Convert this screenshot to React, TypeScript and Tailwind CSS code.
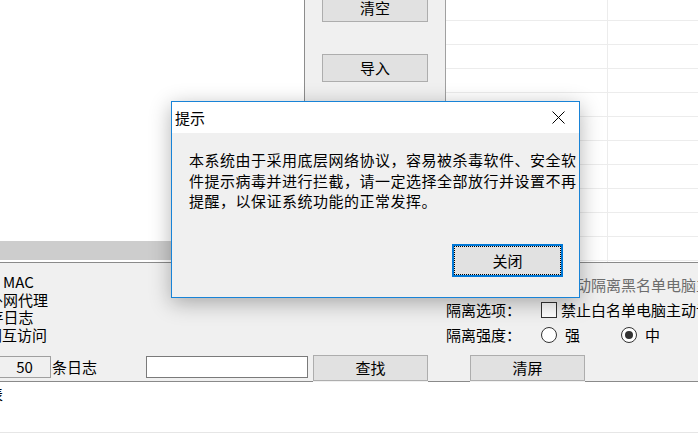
export default function App() {
  const rows = Array.from({ length: 12 });
  const btn =
    "flex items-center justify-center border border-[#adadad] bg-[#e1e1e1] text-black leading-[20px] shrink-0";
  return (
    <div className="relative w-[698px] h-[434px] overflow-hidden bg-white text-black text-[15px] leading-[20px] font-['Noto_Sans_CJK_SC',sans-serif]">
      {/* top area */}
      <div className="flex h-[262px]">
        <div className="w-[304px] flex flex-col shrink-0">
          <div className="h-[241px] bg-white" />
          <div className="h-[19px] bg-[#cdcdcd]" />
        </div>
        <div className="w-[142px] h-[262px] shrink-0 border-l border-r border-l-[#8c8c8c] border-r-[#a0a0a0] bg-[#f0f0f0] flex flex-col items-start">
          <div className={`${btn} -mt-[6px] ml-[17px] w-[106px] h-[28px]`}>清空</div>
          <div className={`${btn} mt-[32px] ml-[17px] w-[106px] h-[28px]`}>导入</div>
        </div>
        <div className="flex-1 overflow-hidden">
          <div className="-mt-[3px]">
            {rows.map((_, i) => (
              <div key={i} className="flex h-[24px] border-b border-[#ececec]">
                <div className="w-[162px] border-r border-[#ececec]" />
                <div className="flex-1" />
              </div>
            ))}
          </div>
        </div>
      </div>

      {/* bottom panel */}
      <div className="h-[120px] border-y border-[#8a8a8a] bg-[#f0f0f0] flex flex-col whitespace-nowrap">
        <div className="h-[92px] flex">
          <div className="w-[446px] shrink-0 pt-[10px] leading-[17.6px]">
            <div className="pl-[3px]">MAC</div>
            <div className="-ml-[12px]">外网代理</div>
            <div className="-ml-[11.5px]">存日志</div>
            <div className="-ml-[13px]">网互访问</div>
          </div>
          <div className="flex-1 pt-[9px]">
            <div className="h-[25px] flex items-center">
              <div className="w-[95px] shrink-0">隔离模式：</div>
              <div className="w-[16px] h-[16px] shrink-0 border border-[#bcbcbc] bg-[#f0f0f0]" />
              <span className="ml-[4px] text-[#6d6d6d]">自动隔离黑名单电脑主动访问</span>
            </div>
            <div className="h-[25px] flex items-center">
              <div className="w-[95px] shrink-0">隔离选项：</div>
              <div className="w-[16px] h-[16px] shrink-0 border border-[#333333] bg-white" />
              <span className="ml-[4px]">禁止白名单电脑主动访问</span>
            </div>
            <div className="h-[25px] flex items-center">
              <div className="w-[95px] shrink-0">隔离强度：</div>
              <div className="w-[80px] shrink-0 flex items-center">
                <div className="w-[16px] h-[16px] rounded-full border border-[#333333] bg-white shrink-0" />
                <span className="ml-[8px]">强</span>
              </div>
              <div className="flex items-center">
                <div className="w-[16px] h-[16px] rounded-full border border-[#333333] bg-white shrink-0 flex items-center justify-center">
                  <div className="w-[8px] h-[8px] rounded-full bg-[#333333]" />
                </div>
                <span className="ml-[8px]">中</span>
              </div>
            </div>
          </div>
        </div>
        <div className="h-[26px] flex items-start">
          <div className="w-[146px] shrink-0 h-[22px] mt-[1px] flex items-center">
            <div className="-ml-[2px] w-[53px] h-[22px] shrink-0 border border-[#a0a0a0] bg-[#f0f0f0] flex items-center justify-center">
              50
            </div>
            <span className="ml-[1px]">条日志</span>
          </div>
          <div className="w-[162px] h-[22px] mt-[1px] shrink-0 border border-[#7a7a7a] bg-white" />
          <div className={`${btn} ml-[5px] w-[115px] h-[26px] shadow-[0_1px_0_#f0f0f0]`}>查找</div>
          <div className={`${btn} ml-[42px] w-[115px] h-[26px] shadow-[0_1px_0_#f0f0f0]`}>清屏</div>
        </div>
      </div>

      {/* log area */}
      <div className="h-[51px] border-b border-[#e6e6e6] pt-[2px]">
        <div className="-ml-[12px]">表</div>
      </div>

      {/* dialog */}
      <div className="absolute left-[171px] top-[101px] w-[409px] h-[197px] border border-[#1883d7] bg-[#f0f0f0] shadow-[0_5px_20px_rgba(0,0,0,0.3)] flex flex-col">
        <div className="h-[31px] bg-white flex items-center justify-between pl-[3px] pr-[14px]">
          <span>提示</span>
          <svg width="13" height="13" viewBox="0 0 13 13" className="shrink-0">
            <path d="M0.5 0.5 L12.5 12.5 M12.5 0.5 L0.5 12.5" stroke="#000" strokeWidth="1" fill="none" />
          </svg>
        </div>
        <div className="flex-1 flex flex-col pl-[17px] pr-[16px] pt-[17px] pb-[20px]">
          <div className="leading-[20.5px] tracking-[0.5px] whitespace-nowrap">
            <div>本系统由于采用底层网络协议，容易被杀毒软件、安全软</div>
            <div>件提示病毒并进行拦截，请一定选择全部放行并设置不再</div>
            <div>提醒，以保证系统功能的正常发挥。</div>
          </div>
          <div className="mt-auto flex justify-end">
            <div className="relative w-[111px] h-[33px] border-2 border-[#0078d7] bg-[#e1e1e1] flex items-center justify-center">
              <span className="absolute inset-0 border border-dotted border-black" />
              <span>关闭</span>
            </div>
          </div>
        </div>
      </div>
    </div>
  );
}
